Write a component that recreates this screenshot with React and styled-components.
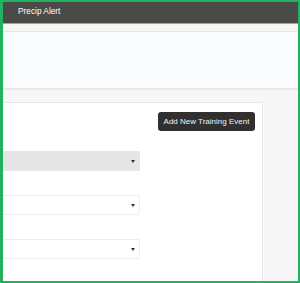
import styled, { createGlobalStyle } from "styled-components";

const GlobalStyle = createGlobalStyle`
  html, body {
    margin: 0;
    padding: 0;
    background: #ffffff;
    font-family: "Liberation Sans", Arial, sans-serif;
  }
`;

const Frame = styled.div`
    box-sizing: border-box;
    width: 300px;
    height: 283px;
    border: 2px solid #22b25d;
    border-left-width: 3px;
    display: flex;
    flex-direction: column;
    overflow: hidden;
    background: #f7f7f7;
  `,
  Header = styled.div`
    box-sizing: border-box;
    height: 22px;
    flex-shrink: 0;
    background: #4a4b48;
    border-bottom: 1px solid #a3a3a1;
    padding: 4px 0 0 15px;
    color: #ffffff;
    font-size: 8.3px;
  `,
  SubBar = styled.div`
    height: 7px;
    flex-shrink: 0;
    background: #f6f6f3;
    border-bottom: 1px solid #e6e6e6;
  `,
  Banner = styled.div`
    height: 56px;
    flex-shrink: 0;
    background: #fafbfc;
    border-bottom: 2px solid #e8e8e8;
  `,
  Main = styled.div`
    flex: 1;
    padding-top: 12px;
    display: flex;
  `,
  Card = styled.div`
    box-sizing: border-box;
    width: 260px;
    background: #ffffff;
    border-top: 1px solid #e6e6e6;
    border-right: 1px solid #e9e9e9;
    padding: 9px 7px 0 0;
    display: flex;
    flex-direction: column;
  `,
  Toolbar = styled.div`
    display: flex;
    justify-content: flex-end;
  `,
  Button = styled.button`
    height: 19px;
    width: 97px;
    border: none;
    border-radius: 3px;
    background: #2f302f;
    color: #f2f2f2;
    font-family: "Liberation Sans", Arial, sans-serif;
    font-size: 8px;
    padding: 0;
  `,
  Fields = styled.div`
    margin-top: 20px;
    display: flex;
    flex-direction: column;
    gap: 24px;
  `,
  Select = styled.div`
    box-sizing: border-box;
    width: 137px;
    height: 20px;
    background: ${(p) => (p.disabled ? "#e6e6e6" : "#ffffff")};
    border: 1px solid ${(p) => (p.disabled ? "#e6e6e6" : "#eeeeee")};
    border-left: none;
    border-radius: 0 2px 2px 0;
    display: flex;
    align-items: center;
    justify-content: flex-end;
    padding-right: 4px;
  `,
  Caret = styled.span`
    width: 0;
    height: 0;
    border-left: 2.5px solid transparent;
    border-right: 2.5px solid transparent;
    border-top: 3.5px solid #333333;
  `;

function App() {
  const selects = [{ id: 1, disabled: true }, { id: 2 }, { id: 3 }];

  return (
    <>
      <GlobalStyle />
      <Frame>
        <Header>Precip Alert</Header>
        <SubBar />
        <Banner />
        <Main>
          <Card>
            <Toolbar>
              <Button>Add New Training Event</Button>
            </Toolbar>
            <Fields>
              {selects.map((s) => (
                <Select key={s.id} disabled={s.disabled}>
                  <Caret />
                </Select>
              ))}
            </Fields>
          </Card>
        </Main>
      </Frame>
    </>
  );
}

export default App;
